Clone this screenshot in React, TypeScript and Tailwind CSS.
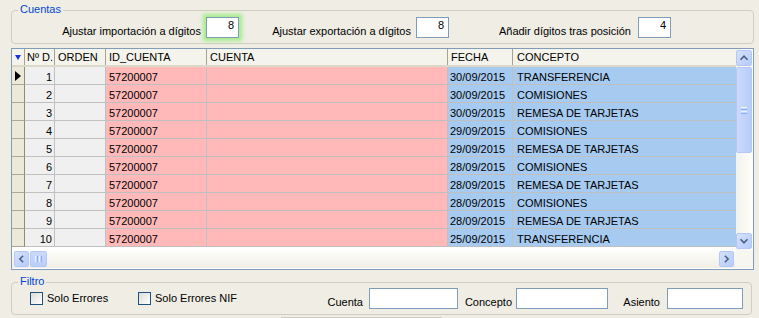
import React from 'react';

const rows = [
  { n: 1, fecha: '30/09/2015', concepto: 'TRANSFERENCIA' },
  { n: 2, fecha: '30/09/2015', concepto: 'COMISIONES' },
  { n: 3, fecha: '30/09/2015', concepto: 'REMESA DE TARJETAS' },
  { n: 4, fecha: '29/09/2015', concepto: 'COMISIONES' },
  { n: 5, fecha: '29/09/2015', concepto: 'REMESA DE TARJETAS' },
  { n: 6, fecha: '28/09/2015', concepto: 'COMISIONES' },
  { n: 7, fecha: '28/09/2015', concepto: 'REMESA DE TARJETAS' },
  { n: 8, fecha: '28/09/2015', concepto: 'COMISIONES' },
  { n: 9, fecha: '28/09/2015', concepto: 'REMESA DE TARJETAS' },
  { n: 10, fecha: '25/09/2015', concepto: 'TRANSFERENCIA' },
];

function Arrow({ dir }: { dir: 'up' | 'down' | 'left' | 'right' }) {
  const pts = {
    up: '4,10 8,6 12,10',
    down: '4,6 8,10 12,6',
    left: '10,4 6,8 10,12',
    right: '6,4 10,8 6,12',
  }[dir];
  return (
    <svg width="16" height="16" viewBox="0 0 16 16">
      <polyline points={pts} fill="none" stroke="#4D6185" strokeWidth="2" />
    </svg>
  );
}

function ScrollBtn({ dir, className = '' }: { dir: 'up' | 'down' | 'left' | 'right'; className?: string }) {
  return (
    <div
      className={`flex items-center justify-center rounded-[2px] border border-[#B5C8F5] bg-gradient-to-br from-[#D5E1FD] to-[#B6CBF7] ${className}`}
    >
      <Arrow dir={dir} />
    </div>
  );
}

function Checkbox({ label }: { label: string }) {
  return (
    <div className="flex items-center gap-[4px]">
      <div className="w-[13px] h-[13px] border border-[#1C5180] bg-gradient-to-br from-[#DCDCD6] to-white" />
      <span className="leading-[13px]">{label}</span>
    </div>
  );
}

function App() {
  const cell = 'h-full flex items-center border-r border-[#C0C0C0] pt-[2px]';
  return (
    <div className="w-[759px] h-[318px] overflow-hidden bg-[#EFEDE4] text-black text-[11px] font-['Liberation_Sans',Arial,sans-serif] pt-[10px]">
      {/* Cuentas */}
      <div className="relative ml-[11px] w-[743px] h-[34px] border border-[#D0CEBF] rounded-[4px] flex items-end pb-[5px]">
        <span className="absolute left-[6px] top-[-8px] px-[2px] bg-[#EFEDE4] text-[#0046D5] leading-[13px]">Cuentas</span>
        <span className="w-[194px] text-right pr-[5px] leading-[13px]">Ajustar importación a dígitos</span>
        <div className="w-[33px] h-[21px] bg-white border border-[#7F9DB9] text-right pr-[4px] leading-[15px] shadow-[0_0_4px_3px_#A4EC8C]">8</div>
        <span className="w-[177px] text-right pr-[5px] leading-[13px]">Ajustar exportación a dígitos</span>
        <div className="w-[33px] h-[21px] bg-white border border-[#7F9DB9] text-right pr-[4px] leading-[15px]">8</div>
        <span className="w-[189px] text-right pr-[7px] leading-[13px]">Añadir dígitos tras posición</span>
        <div className="w-[33px] h-[21px] bg-white border border-[#7F9DB9] text-right pr-[4px] leading-[15px]">4</div>
      </div>

      {/* Grid */}
      <div className="ml-[11px] mt-[4px] w-[743px] h-[222px] border border-[#7F9DB9] bg-white flex flex-col">
        <div className="flex h-[201px]">
          <div className="w-[724px] flex flex-col">
            <div className="flex h-[18px] bg-[#F5F4EC] border-b-2 border-[#DDD9C8] leading-[14px]">
              <div className="w-[13px] h-full flex items-center justify-center border-r border-[#A7A38E]">
                <svg width="6" height="5" viewBox="0 0 6 5">
                  <polygon points="0,0 6,0 3,5" fill="#1533D6" />
                </svg>
              </div>
              <div className="w-[30px] h-full flex items-center pl-[2px] border-r border-[#A7A38E]">Nº D.</div>
              <div className="w-[51px] h-full flex items-center pl-[3px] border-r border-[#A7A38E]">ORDEN</div>
              <div className="w-[101px] h-full flex items-center pl-[3px] border-r border-[#A7A38E]">ID_CUENTA</div>
              <div className="w-[241px] h-full flex items-center pl-[3px] border-r border-[#A7A38E]">CUENTA</div>
              <div className="w-[65px] h-full flex items-center pl-[3px] border-r border-[#A7A38E]">FECHA</div>
              <div className="w-[223px] h-full flex items-center pl-[4px]">CONCEPTO</div>
            </div>
            {rows.map((r) => (
              <div key={r.n} className="flex h-[18px] leading-[14px]">
                <div className="w-[13px] h-full flex items-center pl-[3px] bg-[#ECE9D8] border-r border-[#8F8B74] border-b border-b-[#ACA899]">
                  {r.n === 1 && (
                    <svg width="6" height="10" viewBox="0 0 6 10">
                      <polygon points="0,0 6,5 0,10" fill="#000" />
                    </svg>
                  )}
                </div>
                <div className={`w-[30px] ${cell} justify-end pr-[2px] bg-[#F0F0F0] border-b`}>{r.n}</div>
                <div className={`w-[51px] ${cell} bg-[#F0F0F0] border-b`} />
                <div className={`w-[101px] ${cell} pl-[3px] bg-[#FFB9B9] border-b`}>57200007</div>
                <div className={`w-[241px] ${cell} bg-[#FFB9B9] border-b`} />
                <div className={`w-[65px] ${cell} pl-[2px] bg-[#A6CAF0] border-b`}>{r.fecha}</div>
                <div className={`w-[223px] ${cell} pl-[4px] bg-[#A6CAF0] border-b border-r-0`}>{r.concepto}</div>
              </div>
            ))}
          </div>
          {/* vertical scrollbar */}
          <div className="w-[17px] flex flex-col bg-gradient-to-r from-[#F3F1EC] to-[#FEFEFB] py-[1px]">
            <ScrollBtn dir="up" className="h-[16px] w-[16px]" />
            <div className="h-[86px] w-[16px] mt-[1px] flex items-center justify-center rounded-[2px] border border-[#B5C8F5] bg-gradient-to-r from-[#CBDAFC] to-[#B9CDF8]">
              <div className="flex flex-col gap-[1px]">
                <div className="w-[6px] h-[1px] bg-[#EEF4FE]" />
                <div className="w-[6px] h-[1px] bg-[#8CB0F8]" />
                <div className="w-[6px] h-[1px] bg-[#EEF4FE]" />
                <div className="w-[6px] h-[1px] bg-[#8CB0F8]" />
              </div>
            </div>
            <div className="flex-1" />
            <ScrollBtn dir="down" className="h-[16px] w-[16px]" />
          </div>
        </div>
        {/* horizontal scrollbar */}
        <div className="flex h-[18px]">
          <div className="w-[724px] flex items-center gap-[1px] pl-[2px] bg-gradient-to-b from-[#FEFEFB] to-[#F0EEE5]">
            <ScrollBtn dir="left" className="w-[15px] h-[16px]" />
            <div className="w-[17px] h-[16px] flex items-center justify-center rounded-[2px] border border-[#B5C8F5] bg-gradient-to-b from-[#CBDAFC] to-[#B9CDF8]">
              <div className="flex gap-[1px]">
                <div className="h-[6px] w-[1px] bg-[#EEF4FE]" />
                <div className="h-[6px] w-[1px] bg-[#8CB0F8]" />
                <div className="h-[6px] w-[1px] bg-[#EEF4FE]" />
                <div className="h-[6px] w-[1px] bg-[#8CB0F8]" />
              </div>
            </div>
            <div className="flex-1" />
            <ScrollBtn dir="right" className="w-[15px] h-[16px] mr-[2px]" />
          </div>
          <div className="w-[17px] bg-[#F7F6F1]" />
        </div>
      </div>

      {/* Filtro */}
      <div className="relative ml-[11px] mt-[12px] w-[741px] h-[33px] border border-[#D0CEBF] rounded-[4px] flex">
        <span className="absolute left-[6px] top-[-8px] px-[2px] bg-[#EFEDE4] text-[#0046D5] leading-[13px]">Filtro</span>
        <div className="w-[126px] pl-[18px] pt-[9px]">
          <Checkbox label="Solo Errores" />
        </div>
        <div className="w-[130px] pt-[9px]">
          <Checkbox label="Solo Errores NIF" />
        </div>
        <div className="flex items-end pb-[5px]">
          <span className="w-[101px] text-right pr-[6px] leading-[13px]">Cuenta</span>
          <div className="w-[89px] h-[21px] bg-white border border-[#7F9DB9]" />
          <span className="w-[58px] text-right pr-[4px] leading-[13px]">Concepto</span>
          <div className="w-[92px] h-[21px] bg-white border border-[#7F9DB9]" />
          <span className="w-[59px] text-right pr-[7px] leading-[13px]">Asiento</span>
          <div className="w-[76px] h-[21px] bg-white border border-[#7F9DB9]" />
        </div>
      </div>
      <div className="ml-[281px] mt-[2px] w-[161px] h-[2px] bg-[#CFCDC3]" />
    </div>
  );
}

export default App;
